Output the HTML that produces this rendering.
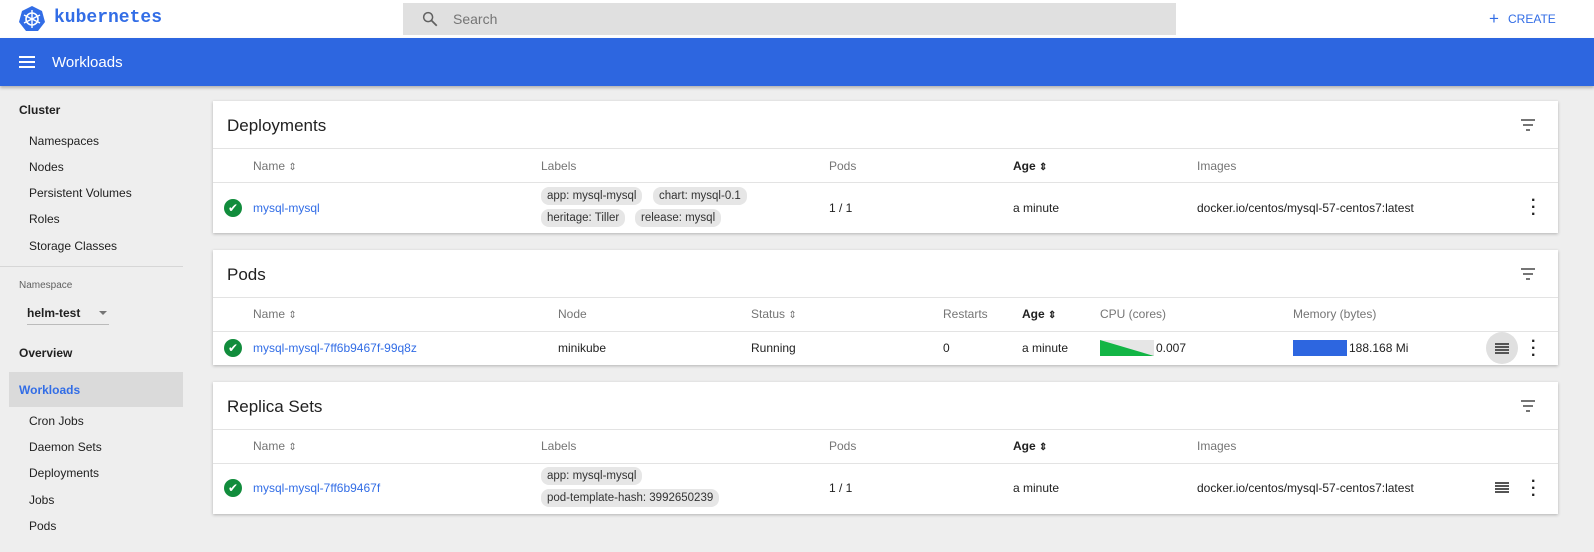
<!DOCTYPE html><html><head><style>
*{box-sizing:border-box;margin:0;padding:0}
body{width:1594px;height:552px;overflow:hidden;background:#eeeeee;font-family:"Liberation Sans",sans-serif;font-size:12px;color:#212121;position:relative}
.a{position:absolute;white-space:nowrap}
.top{position:absolute;left:0;top:0;width:1594px;height:38px;background:#fff}
.blue{position:absolute;left:0;top:38px;width:1594px;height:48px;background:#2d66e0;box-shadow:0 2px 3px rgba(0,0,0,.25)}
.card{position:absolute;left:213px;width:1345px;background:#fff;box-shadow:0 1px 3px rgba(0,0,0,.25)}
.line{position:absolute;left:0;width:100%;height:1px;background:#e3e3e3}
.h{color:#757575}
.lnk{color:#326de6}
.chip{position:absolute;background:#e6e6e6;border-radius:8px;padding:3px 6px;font-size:11.5px;color:#333}
.title{position:absolute;left:14px;top:15px;font-size:17px;color:#212121}
.side{font-size:12px;color:#212121}
.srt{font-size:10px}
</style></head><body>
<div class="top"></div>
<svg class="a" style="left:18px;top:5px" width="28" height="28" viewBox="0 0 28 28"><polygon points="14,1 24,6 27,17 20,26 8,26 1,17 4,6" fill="#326de6"/><circle cx="14" cy="14" r="6" fill="none" stroke="#fff" stroke-width="1.6"/><g stroke="#fff" stroke-width="1.4"><line x1="14" y1="5" x2="14" y2="23"/><line x1="6" y1="10" x2="22" y2="18"/><line x1="6" y1="18" x2="22" y2="10"/></g></svg>
<div class="a" style="left:54px;top:8px;font-family:'Liberation Mono',monospace;font-size:18px;color:#326de6;font-weight:bold">kubernetes</div>
<div class="a" style="left:403px;top:3px;width:773px;height:32px;background:#e0e0e0"></div>
<svg class="a" style="left:421px;top:10px" width="18" height="18" viewBox="0 0 24 24"><circle cx="9.5" cy="9.5" r="6" fill="none" stroke="#616161" stroke-width="2"/><line x1="14" y1="14" x2="21" y2="21" stroke="#616161" stroke-width="2.4"/></svg>
<div class="a" style="left:453px;top:11px;font-size:14px;color:#757575">Search</div>
<div class="a" style="left:1489px;top:9px;font-size:17px;color:#326de6">+</div>
<div class="a" style="left:1508px;top:12px;font-size:12px;color:#326de6">CREATE</div>
<div class="blue"></div>
<div class="a" style="left:19px;top:56px;width:16px;height:2px;background:#fff;box-shadow:0 5px 0 #fff,0 10px 0 #fff"></div>
<div class="a" style="left:52px;top:54px;font-size:15px;color:#fff">Workloads</div>

<div class="a side" style="left:19px;top:103px;font-weight:bold">Cluster</div>
<div class="a side" style="left:29px;top:134px">Namespaces</div>
<div class="a side" style="left:29px;top:160px">Nodes</div>
<div class="a side" style="left:29px;top:186px">Persistent Volumes</div>
<div class="a side" style="left:29px;top:212px">Roles</div>
<div class="a side" style="left:29px;top:239px">Storage Classes</div>
<div class="a" style="left:0;top:266px;width:183px;height:1px;background:#d6d6d6"></div>
<div class="a" style="left:19px;top:280px;font-size:10px;color:#616161">Namespace</div>
<div class="a side" style="left:27px;top:306px;font-weight:bold">helm-test</div>
<div class="a" style="left:99px;top:311px;border:4px solid transparent;border-top:4px solid #757575"></div>
<div class="a" style="left:27px;top:324px;width:82px;height:1px;background:#bbb"></div>
<div class="a side" style="left:19px;top:346px;font-weight:bold">Overview</div>
<div class="a" style="left:9px;top:372px;width:174px;height:35px;background:#dadada"></div>
<div class="a side" style="left:19px;top:383px;font-weight:bold;color:#326de6">Workloads</div>
<div class="a side" style="left:29px;top:414px">Cron Jobs</div>
<div class="a side" style="left:29px;top:440px">Daemon Sets</div>
<div class="a side" style="left:29px;top:466px">Deployments</div>
<div class="a side" style="left:29px;top:493px">Jobs</div>
<div class="a side" style="left:29px;top:519px">Pods</div>

<!-- Deployments -->
<div class="card" style="top:101px;height:132px">
<div class="title">Deployments</div>
<div class="line" style="top:47px"></div><div class="line" style="top:81px"></div>
<div class="a h" style="left:40px;top:58px">Name <span class="srt">⇕</span></div>
<div class="a h" style="left:328px;top:58px">Labels</div>
<div class="a h" style="left:616px;top:58px">Pods</div>
<div class="a" style="left:800px;top:58px;font-weight:bold">Age <span class="srt">⇕</span></div>
<div class="a h" style="left:984px;top:58px">Images</div>
<div class="a" style="left:11px;top:98px;width:18px;height:18px;border-radius:50%;background:#118c3c;color:#fff;font-size:12px;text-align:center;line-height:18px">✔</div>
<div class="a lnk" style="left:40px;top:100px">mysql-mysql</div>
<div class="chip" style="left:328px;top:86px">app: mysql-mysql</div>
<div class="chip" style="left:440px;top:86px">chart: mysql-0.1</div>
<div class="chip" style="left:328px;top:108px">heritage: Tiller</div>
<div class="chip" style="left:422px;top:108px">release: mysql</div>
<div class="a" style="left:616px;top:100px">1 / 1</div>
<div class="a" style="left:800px;top:100px">a minute</div>
<div class="a" style="left:984px;top:100px">docker.io/centos/mysql-57-centos7:latest</div>
<div class="a" style="left:1318px;top:96px;font-size:16px;font-weight:bold;line-height:7px">·<br>·<br>·</div>
<div class="a" style="left:1308px;top:18px;width:14px;height:2px;background:#757575"></div>
<div class="a" style="left:1310px;top:23px;width:10px;height:2px;background:#757575"></div>
<div class="a" style="left:1313px;top:28px;width:4px;height:2px;background:#757575"></div>
</div>

<!-- Pods -->
<div class="card" style="top:250px;height:115px">
<div class="title">Pods</div>
<div class="line" style="top:47px"></div><div class="line" style="top:81px"></div>
<div class="a h" style="left:40px;top:57px">Name <span class="srt">⇕</span></div>
<div class="a h" style="left:345px;top:57px">Node</div>
<div class="a h" style="left:538px;top:57px">Status <span class="srt">⇕</span></div>
<div class="a h" style="left:730px;top:57px">Restarts</div>
<div class="a" style="left:809px;top:57px;font-weight:bold">Age <span class="srt">⇕</span></div>
<div class="a h" style="left:887px;top:57px">CPU (cores)</div>
<div class="a h" style="left:1080px;top:57px">Memory (bytes)</div>
<div class="a" style="left:11px;top:89px;width:18px;height:18px;border-radius:50%;background:#118c3c;color:#fff;font-size:12px;text-align:center;line-height:18px">✔</div>
<div class="a lnk" style="left:40px;top:91px">mysql-mysql-7ff6b9467f-99q8z</div>
<div class="a" style="left:345px;top:91px">minikube</div>
<div class="a" style="left:538px;top:91px">Running</div>
<div class="a" style="left:730px;top:91px">0</div>
<div class="a" style="left:809px;top:91px">a minute</div>
<svg class="a" style="left:887px;top:90px" width="54" height="16"><rect width="54" height="16" fill="#e6e6e6"/><polygon points="0,0 0,16 54,16" fill="#12b545"/></svg>
<div class="a" style="left:943px;top:91px">0.007</div>
<div class="a" style="left:1080px;top:90px;width:54px;height:16px;background:#2d66e0"></div>
<div class="a" style="left:1136px;top:91px">188.168 Mi</div>
<div class="a" style="left:1273px;top:82px;width:32px;height:32px;border-radius:50%;background:#e0e0e0"></div>
<div class="a" style="left:1282px;top:93px;width:14px;height:1.5px;background:#555;box-shadow:0 3px 0 #555,0 6px 0 #555,0 9px 0 #555"></div>
<div class="a" style="left:1318px;top:88px;font-size:16px;font-weight:bold;line-height:7px">·<br>·<br>·</div>
<div class="a" style="left:1308px;top:18px;width:14px;height:2px;background:#757575"></div>
<div class="a" style="left:1310px;top:23px;width:10px;height:2px;background:#757575"></div>
<div class="a" style="left:1313px;top:28px;width:4px;height:2px;background:#757575"></div>
</div>

<!-- Replica Sets -->
<div class="card" style="top:382px;height:132px">
<div class="title">Replica Sets</div>
<div class="line" style="top:47px"></div><div class="line" style="top:81px"></div>
<div class="a h" style="left:40px;top:57px">Name <span class="srt">⇕</span></div>
<div class="a h" style="left:328px;top:57px">Labels</div>
<div class="a h" style="left:616px;top:57px">Pods</div>
<div class="a" style="left:800px;top:57px;font-weight:bold">Age <span class="srt">⇕</span></div>
<div class="a h" style="left:984px;top:57px">Images</div>
<div class="a" style="left:11px;top:97px;width:18px;height:18px;border-radius:50%;background:#118c3c;color:#fff;font-size:12px;text-align:center;line-height:18px">✔</div>
<div class="a lnk" style="left:40px;top:99px">mysql-mysql-7ff6b9467f</div>
<div class="chip" style="left:328px;top:85px">app: mysql-mysql</div>
<div class="chip" style="left:328px;top:107px">pod-template-hash: 3992650239</div>
<div class="a" style="left:616px;top:99px">1 / 1</div>
<div class="a" style="left:800px;top:99px">a minute</div>
<div class="a" style="left:984px;top:99px">docker.io/centos/mysql-57-centos7:latest</div>
<div class="a" style="left:1282px;top:100px;width:14px;height:1.5px;background:#555;box-shadow:0 3px 0 #555,0 6px 0 #555,0 9px 0 #555"></div>
<div class="a" style="left:1318px;top:96px;font-size:16px;font-weight:bold;line-height:7px">·<br>·<br>·</div>
<div class="a" style="left:1308px;top:18px;width:14px;height:2px;background:#757575"></div>
<div class="a" style="left:1310px;top:23px;width:10px;height:2px;background:#757575"></div>
<div class="a" style="left:1313px;top:28px;width:4px;height:2px;background:#757575"></div>
</div>
</body></html>
